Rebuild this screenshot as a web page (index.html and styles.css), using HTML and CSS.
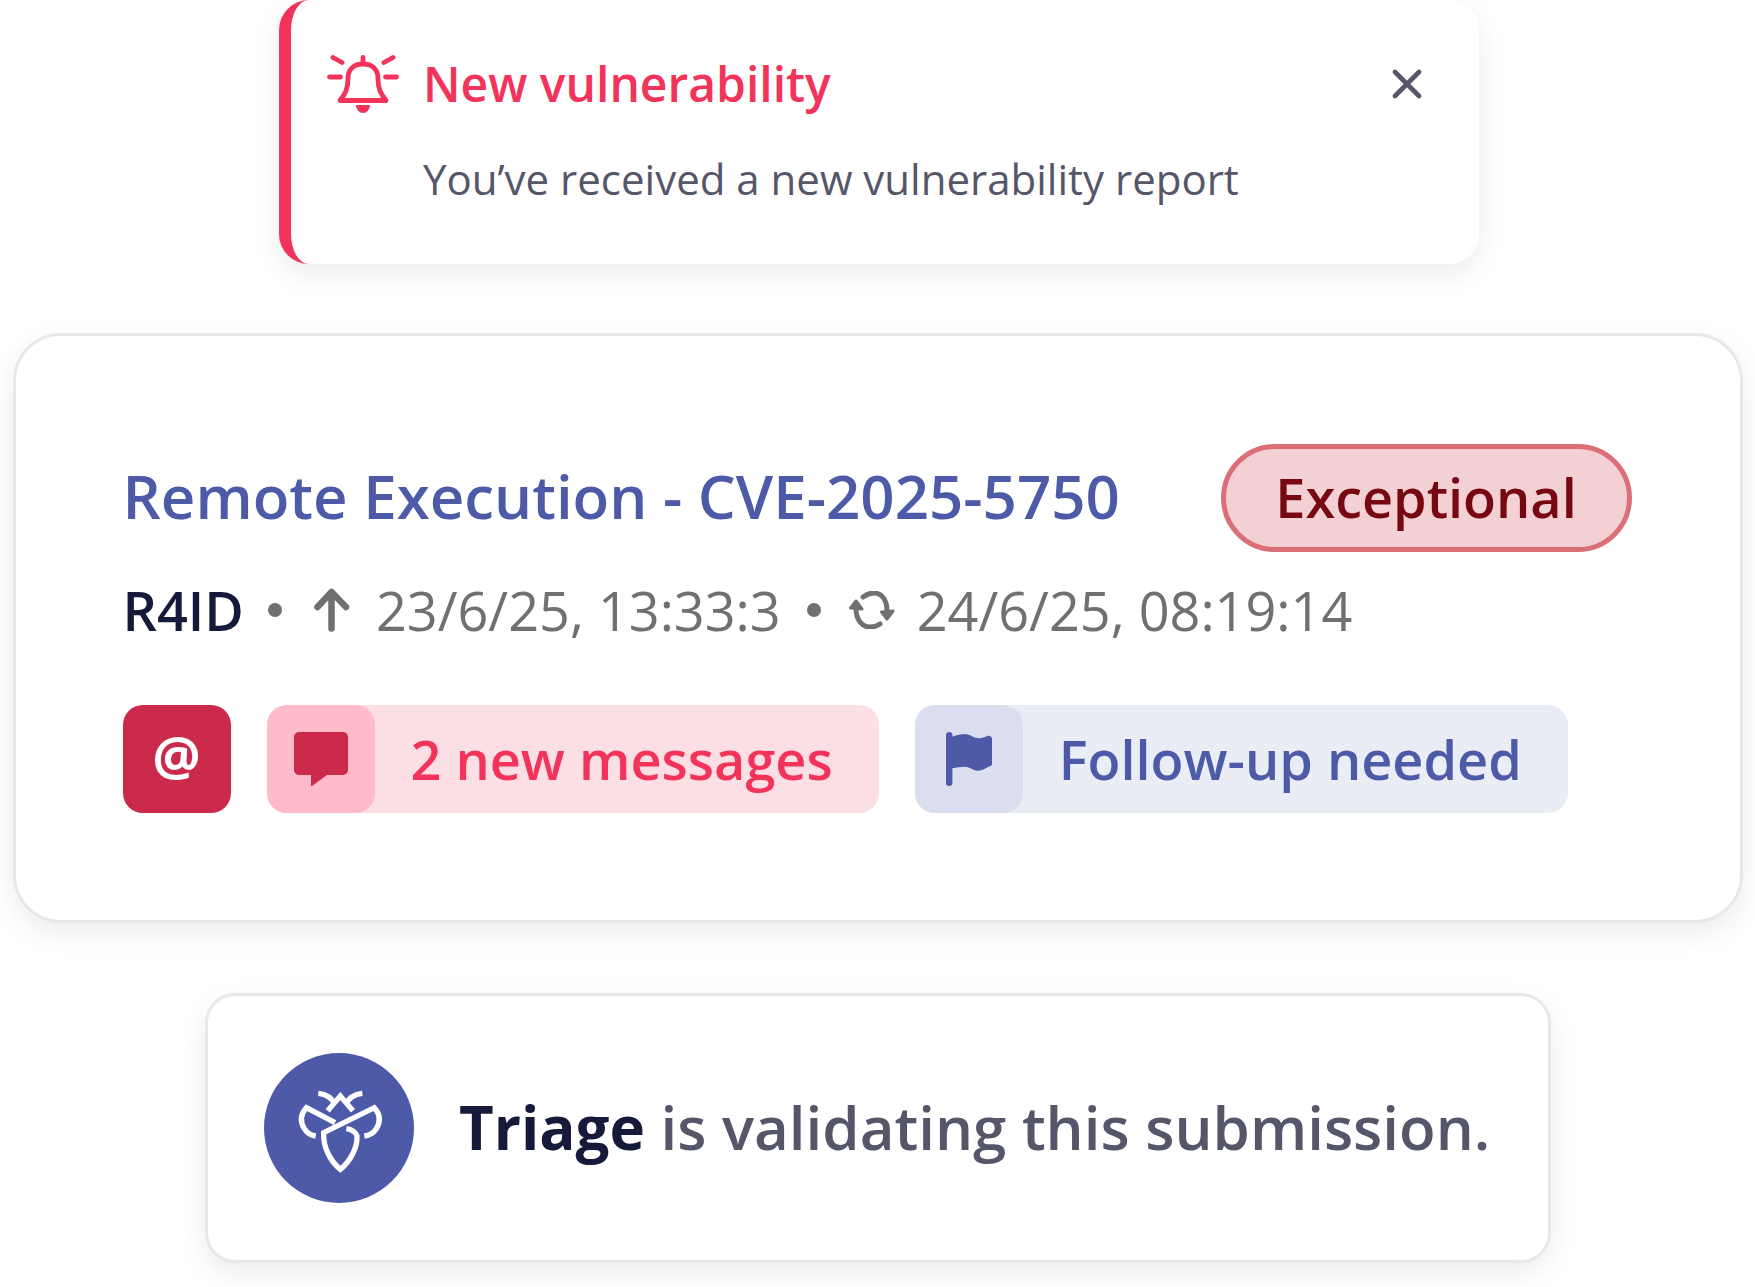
FILE: index.html
```html
<!DOCTYPE html>
<html lang="en">
<head>
<meta charset="utf-8">
<title>Vulnerability report</title>
<link rel="stylesheet" href="styles.css">
</head>
<body>
<main class="stack">
  <section class="toast">
    <div class="toast-head">
      <svg class="bell" viewBox="0 0 72 58" fill="none" stroke="#f2335a" stroke-width="4.8" stroke-linecap="round" stroke-linejoin="round">
        <path d="M13 45.500C18 39 21 34 21 24C21 14 27 9 36 9C45 9 51 14 51 24C51 34 54 39 59 45.500Z"/>
        <path d="M36 2.500V8M6 2.500L15 7.500M66 2.500L57 7.500M2.500 22H13.500M58.500 22H69.500"/>
        <path d="M29 50H43A7 8 0 0 1 29 50Z" fill="#f2335a" stroke="none"/>
      </svg>
      <h2 class="toast-title">New vulnerability</h2>
      <svg class="close" viewBox="0 0 30 30" fill="none" stroke="#55566a" stroke-width="4.600" stroke-linecap="round"><path d="M3 3L27 27M27 3L3 27"/></svg>
    </div>
    <p class="toast-body">You’ve received a new vulnerability report</p>
  </section>

  <section class="card">
    <div class="title-row">
      <h1 class="title">Remote Execution - CVE-2025-5750</h1>
      <span class="badge">Exceptional</span>
    </div>
    <div class="meta">
      <span class="author">R4ID</span>
      <span class="dot"></span>
      <svg class="ic-up" viewBox="8 5 37 47" fill="none" stroke="#707070" stroke-width="6.500" stroke-linecap="round" stroke-linejoin="round"><path d="M26.500 11V46.500M12.500 25L26.500 10L41 25"/></svg>
      <span class="time">23/6/25, 13:33:3</span>
      <span class="dot"></span>
      <svg class="ic-sync" viewBox="13 16 48 38" fill="none" stroke="#707070" stroke-width="5" stroke-linecap="round" stroke-linejoin="round">
        <path d="M28 22C32 19 36 18 39 18C47 18 52 25 52 36"/>
        <path d="M46.500 37L58 36L52 44Z" fill="#707070" stroke-width="3"/>
        <path d="M45 49C42 51 38 52 35 52C27 52 21 45 21 33"/>
        <path d="M15.500 33L27 34L21 26Z" fill="#707070" stroke-width="3"/>
      </svg>
      <span>24/6/25, 08:19:14</span>
    </div>
    <div class="tags">
      <span class="at">@</span>
      <div class="pill pill-red">
        <span class="pill-icon">
          <svg class="ic-chat" viewBox="0 0 54 54" fill="#cb2a4b"><path d="M5 0H49A5 5 0 0 1 54 5V38A5 5 0 0 1 49 43H33L18 54Q17 54.500 17 53V43H5A5 5 0 0 1 0 38V5A5 5 0 0 1 5 0Z"/></svg>
        </span>
        <span class="pill-text">2 new messages</span>
      </div>
      <div class="pill pill-blue">
        <span class="pill-icon">
          <svg class="ic-flag" viewBox="0 0 46 54" fill="#4d5aa8"><path d="M3.200 0A3.200 3.200 0 0 1 6.400 3.200V4.700C11 3 15 2 19 2C24 2 28 6.300 33 6.300C36 6.300 39 5 42 3.800C44 3.200 46 4.500 46 7V32C46 33.500 45 34 42 35C39 36.800 36 38.700 32 38.700C27 38.700 24 34.700 19 34.700C15 34.700 10 35.500 6.400 36.300V50.800A3.200 3.200 0 0 1 0 50.800V3.200A3.200 3.200 0 0 1 3.200 0Z"/></svg>
        </span>
        <span class="pill-text">Follow-up needed</span>
      </div>
    </div>
  </section>

  <section class="status">
    <span class="logo">
      <svg viewBox="-4 -4 300 300" fill="none" stroke="#fff" stroke-width="16" stroke-linejoin="miter">
        <path d="M84 42C108 44 125 56 134 76M216 42C192 44 175 56 166 76M112 94L150 50L188 94"/>
        <path d="M134 130L48 85C30 105 28 125 42 148C50 160 62 168 76 170"/>
        <path d="M222 170C238 168 250 160 258 148C272 125 270 105 252 85L100 160C98 205 120 245 150 270C180 245 202 205 200 170C198 160 185 150 168 148"/>
      </svg>
    </span>
    <p class="status-text"><strong>Triage</strong> is validating this submission.</p>
  </section>
</main>
</body>
</html>
```

FILE: styles.css
```css
* { box-sizing: border-box; }
html, body { margin: 0; padding: 0; background: #fff; }
body { font-family: "Open Sans", "Noto Sans", sans-serif; width: 1755px; height: 1287px; overflow: hidden; }
h1, h2, p { margin: 0; font-weight: inherit; }

.stack { display: flex; flex-direction: column; align-items: center; }

.toast {
  width: 1200px; height: 264px; margin-left: 3px;
  border-left: 12px solid #f2335a;
  border-radius: 30px;
  background: #fff;
  box-shadow: 0 10px 30px rgba(0,0,0,.08);
  padding: 55px 57px 0 36px;
}
.toast-head { display: flex; align-items: center; height: 58px; }
.bell { width: 72px; height: 58px; flex: none; }
.toast-title { font-size: 48px; font-weight: 600; color: #f2335a; margin-left: 24px; line-height: 58px; flex: 1; }
.close { width: 30px; height: 30px; flex: none; }
.toast-body { font-size: 42px; color: #55566a; margin-left: 96px; margin-top: 38px; line-height: 56px; }

.card {
  width: 1730px; height: 590px; margin-top: 69px;
  border: 3px solid #e8e8e8;
  border-radius: 48px;
  background: #fff;
  box-shadow: 0 10px 30px rgba(0,0,0,.08);
  padding: 108px 107px 0;
  display: flex; flex-direction: column;
}
.title-row { display: flex; align-items: center; justify-content: space-between; height: 108px; }
.title { font-size: 60px; font-weight: 600; color: #4d5aa8; white-space: nowrap; padding-bottom: 4px; }
.badge {
  width: 411px; height: 108px; border: 5px solid #db6f78; border-radius: 54px;
  background: #f3d0d3; color: #770710;
  font-size: 54px; font-weight: 600; padding-bottom: 2px;
  display: flex; align-items: center; justify-content: center;
  margin-right: 1px;
}
.meta { display: flex; align-items: center; height: 72px; margin-top: 22px; font-size: 54px; color: #707070; white-space: nowrap; }
.author { font-weight: 600; color: #15193a; }
.dot { width: 14px; height: 14px; border-radius: 50%; background: #707070; margin: 0 27px 0 24px; flex: none; }
.ic-up { width: 37px; height: 47px; flex: none; margin: 0 26px 0 4px; }
.time { margin-right: 2px; }
.ic-sync { width: 48px; height: 38px; flex: none; margin-right: 21px; }
.tags { display: flex; gap: 36px; margin-top: 59px; }
.at {
  width: 108px; height: 108px; border-radius: 20px; background: #cb2a4b; color: #fff;
  font-size: 54px; font-weight: 700; padding-bottom: 9px;
  display: flex; align-items: center; justify-content: center; flex: none;
}
.pill { display: flex; align-items: center; height: 108px; border-radius: 20px; padding-right: 46px; gap: 36px; }
.pill-icon { width: 108px; height: 108px; border-radius: 20px; display: flex; align-items: center; justify-content: center; flex: none; }
.pill-text { font-size: 54px; font-weight: 600; white-space: nowrap; padding-bottom: 1px; }
.pill-red { background: #fcdfe4; color: #f2335a; }
.pill-red .pill-icon { background: #ffbbc9; }
.pill-blue { background: #eaedf6; color: #4d5aa8; }
.pill-blue .pill-icon { background: #dbdeee; }
.ic-chat { width: 54px; height: 54px; }
.ic-flag { width: 46px; height: 54px; }

.status {
  width: 1346px; height: 270px; margin-top: 70px;
  border: 3px solid #e8e8e8;
  border-radius: 30px;
  background: #fff;
  box-shadow: 0 10px 30px rgba(0,0,0,.08);
  padding-left: 56.500px;
  display: flex; align-items: center; gap: 45px;
}
.logo { width: 150px; height: 150px; border-radius: 50%; background: #4d5aa8; display: flex; align-items: center; justify-content: center; flex: none; }
.logo svg { width: 100px; height: 100px; }
.status-text { font-size: 60px; font-weight: 600; color: #55566a; white-space: nowrap; padding-bottom: 2px; }
.status-text strong { font-weight: 700; color: #15193a; }
```
